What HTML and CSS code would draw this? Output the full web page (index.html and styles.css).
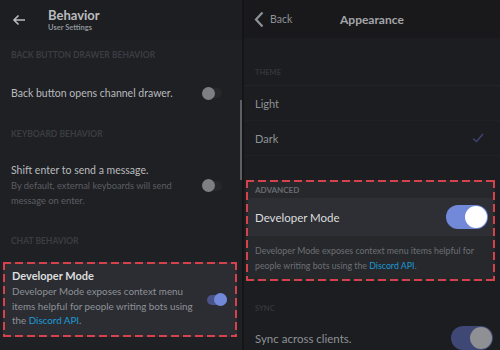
FILE: index.html
```html
<!DOCTYPE html>
<html lang="en">
<head>
    <meta charset="UTF-8">
    <title>Behavior / Appearance</title>
    <link rel="stylesheet" href="styles.css">
</head>
<body>
    <div class="screens">
        <div class="panel panel-left">
            <div class="header">
                <svg class="back-arrow" width="14" height="12" viewBox="0 0 14 12">
                    <path d="M13 6H2M6.5 1.5L2 6l4.5 4.5" fill="none" stroke="#b9bbbe" stroke-width="1.6"/>
                </svg>
                <div class="titles">
                    <div class="title">Behavior</div>
                    <div class="subtitle">User Settings</div>
                </div>
            </div>

            <div class="section-label first">Back button drawer behavior</div>
            <div class="row">
                <div class="row-text">Back button opens channel drawer.</div>
                <div class="small-toggle"><span class="knob"></span></div>
            </div>

            <div class="section-label">Keyboard behavior</div>
            <div class="row tall">
                <div class="row-text">
                    Shift enter to send a message.
                    <div class="row-note">By default, external keyboards will send message on enter.</div>
                </div>
                <div class="small-toggle"><span class="knob"></span></div>
            </div>

            <div class="section-label last">Chat behavior</div>
            <div class="dev-box dashed">
                <div class="row-text">
                    <div class="dev-title">Developer Mode</div>
                    <div class="dev-note">Developer Mode exposes context menu items helpful for people writing bots using the <span class="link">Discord API</span>.</div>
                </div>
                <div class="small-toggle on"><span class="knob"></span></div>
            </div>

            <div class="scrollbar"></div>
        </div>

        <div class="panel panel-right">
            <div class="header header-right">
                <div class="back">
                    <svg width="10" height="17" viewBox="0 0 10 17">
                        <path d="M8.5 1.5L2 8.5l6.5 7" fill="none" stroke="#8e9297" stroke-width="2.2"/>
                    </svg>
                    <span>Back</span>
                </div>
                <div class="header-title">Appearance</div>
            </div>

            <div class="theme-label">Theme</div>
            <div class="option">Light</div>
            <div class="option">
                <span>Dark</span>
                <svg width="12" height="10" viewBox="0 0 12 10">
                    <path d="M1 5.5l3.5 3L11 1" fill="none" stroke="#3d4270" stroke-width="1.5"/>
                </svg>
            </div>

            <div class="advanced dashed">
                <div class="adv-label">Advanced</div>
                <div class="adv-row">
                    <span>Developer Mode</span>
                    <div class="big-toggle"><span class="knob"></span></div>
                </div>
                <div class="adv-note">Developer Mode exposes context menu items helpful for people writing bots using the <span class="link">Discord API</span>.</div>
            </div>

            <div class="theme-label sync">Sync</div>
            <div class="adv-row plain">
                <span>Sync across clients.</span>
                <div class="big-toggle dim"><span class="knob"></span></div>
            </div>
        </div>
    </div>
</body>
</html>
```

FILE: styles.css
```css
body, html {
    margin: 0;
    padding: 0;
    background: #141517;
    font-family: 'Lato', 'Noto Sans', sans-serif;
    color: #dcddde;
}

.screens {
    display: flex;
    width: 500px;
    height: 350px;
    overflow: hidden;
}

.panel {
    position: relative;
    height: 350px;
    overflow: hidden;
}

.panel-left {
    width: 242px;
    background: #1f2024;
}

.panel-right {
    width: 256px;
    margin-left: 2px;
    background: #1c1d20;
}

.header {
    display: flex;
    align-items: center;
    height: 40px;
    padding-left: 12px;
    background: #1d1e22;
}

.back-arrow {
    margin-right: 22px;
}

.title {
    font-size: 13px;
    font-weight: 700;
    color: #b9bbbe;
    line-height: 15px;
}

.subtitle {
    font-size: 7.5px;
    font-weight: 700;
    color: #8e9297;
    line-height: 10px;
}

/* dashed red highlight, longer dashes than border: dashed */
.dashed {
    padding: 2px;
    background:
        repeating-linear-gradient(90deg, #d4434c 0 8px, transparent 8px 12px) top / 100% 2px no-repeat,
        repeating-linear-gradient(90deg, #d4434c 0 8px, transparent 8px 12px) bottom / 100% 2px no-repeat,
        repeating-linear-gradient(180deg, #d4434c 0 8px, transparent 8px 12px) left / 2px 100% no-repeat,
        repeating-linear-gradient(180deg, #d4434c 0 8px, transparent 8px 12px) right / 2px 100% no-repeat;
    background-color: #2b2d32;
}

.section-label {
    font-size: 8.5px;
    font-weight: 700;
    text-transform: uppercase;
    color: #3b3d42;
    padding: 3px 11px 0;
    line-height: 12px;
}

.section-label.first {
    padding-top: 9px;
}

.section-label.last {
    padding-top: 0;
}

.row {
    display: flex;
    align-items: center;
    justify-content: space-between;
    height: 64px;
    padding: 0 20px 0 11px;
}

.row.tall {
    height: 45px;
    padding-top: 23px;
    padding-bottom: 27px;
}

.row-text {
    font-size: 10.5px;
    color: #b9bbbe;
    line-height: 15px;
}

.row-note {
    font-size: 9.3px;
    color: #5c5e63;
    line-height: 15px;
    width: 175px;
}

.small-toggle {
    display: flex;
    align-items: center;
    width: 20px;
    height: 10px;
    border-radius: 5px;
    background: #27282c;
}

.small-toggle .knob {
    width: 13px;
    height: 13px;
    border-radius: 50%;
    background: #7d7f84;
}

.small-toggle.on {
    justify-content: flex-end;
    background: #4a5488;
}

.small-toggle.on .knob {
    background: #7289da;
}

.dev-box {
    display: flex;
    align-items: center;
    justify-content: space-between;
    margin: 15px 5px 0 3px;
    height: 71px;
}

.dev-box .row-text {
    padding: 0 0 2px 7px;
}

.dev-box .small-toggle {
    margin-right: 8px;
}

.dev-title {
    font-size: 11px;
    font-weight: 700;
    color: #dcddde;
    line-height: 14px;
    margin-bottom: 1px;
}

.dev-note {
    font-size: 9.8px;
    color: #8e9297;
    width: 194px;
    line-height: 14.5px;
}

.link {
    color: #1d9ad6;
}

.scrollbar {
    position: absolute;
    top: 100px;
    right: 0;
    width: 2px;
    height: 80px;
    background: #5d5f63;
}

.header-right {
    height: 38px;
    padding-left: 10px;
    background: #19191b;
}

.back {
    display: flex;
    align-items: center;
    font-size: 10.5px;
    color: #8e9297;
    width: 86px;
}

.back svg {
    margin-right: 6px;
}

.header-title {
    font-size: 12px;
    font-weight: 700;
    color: #a3a5a9;
}

.theme-label {
    font-size: 7.5px;
    font-weight: 700;
    text-transform: uppercase;
    color: #34363b;
    padding: 30px 11px 0;
    height: 17px;
    border-bottom: 1px solid #222327;
}

.option {
    display: flex;
    align-items: center;
    justify-content: space-between;
    height: 34px;
    padding: 0 16px 0 11px;
    font-size: 11px;
    color: #8e9297;
    border-bottom: 1px solid #202125;
}

.option:first-of-type {
    color: #b9bbbe;
}

.advanced {
    margin: 24px 5px 0 2px;
    background-color: #26282c;
}

.adv-label {
    font-size: 8px;
    font-weight: 700;
    text-transform: uppercase;
    color: #6a6c71;
    padding: 3px 7px 0;
    height: 13px;
}

.adv-row {
    display: flex;
    align-items: center;
    justify-content: space-between;
    height: 38px;
    padding: 0 5px 0 7px;
    background: #2d2f34;
    font-size: 11.5px;
    color: #dcddde;
}

.adv-note {
    font-size: 8.8px;
    color: #6d7075;
    line-height: 15px;
    padding: 7px 7px 6px;
}

.big-toggle {
    display: flex;
    align-items: center;
    justify-content: flex-end;
    width: 42px;
    height: 24px;
    border-radius: 12px;
    background: #7289da;
}

.big-toggle .knob {
    width: 22px;
    height: 22px;
    margin-right: 1px;
    border-radius: 50%;
    background: #ffffff;
}

.big-toggle.dim {
    background: #3f4775;
}

.big-toggle.dim .knob {
    background: #8e9094;
}

.theme-label.sync {
    padding-top: 23px;
    height: 12px;
    border-bottom: none;
}

.adv-row.plain {
    background: none;
    color: #8e9297;
    height: 44px;
    font-size: 11.5px;
    padding: 0 7px 0 11px;
}
```
